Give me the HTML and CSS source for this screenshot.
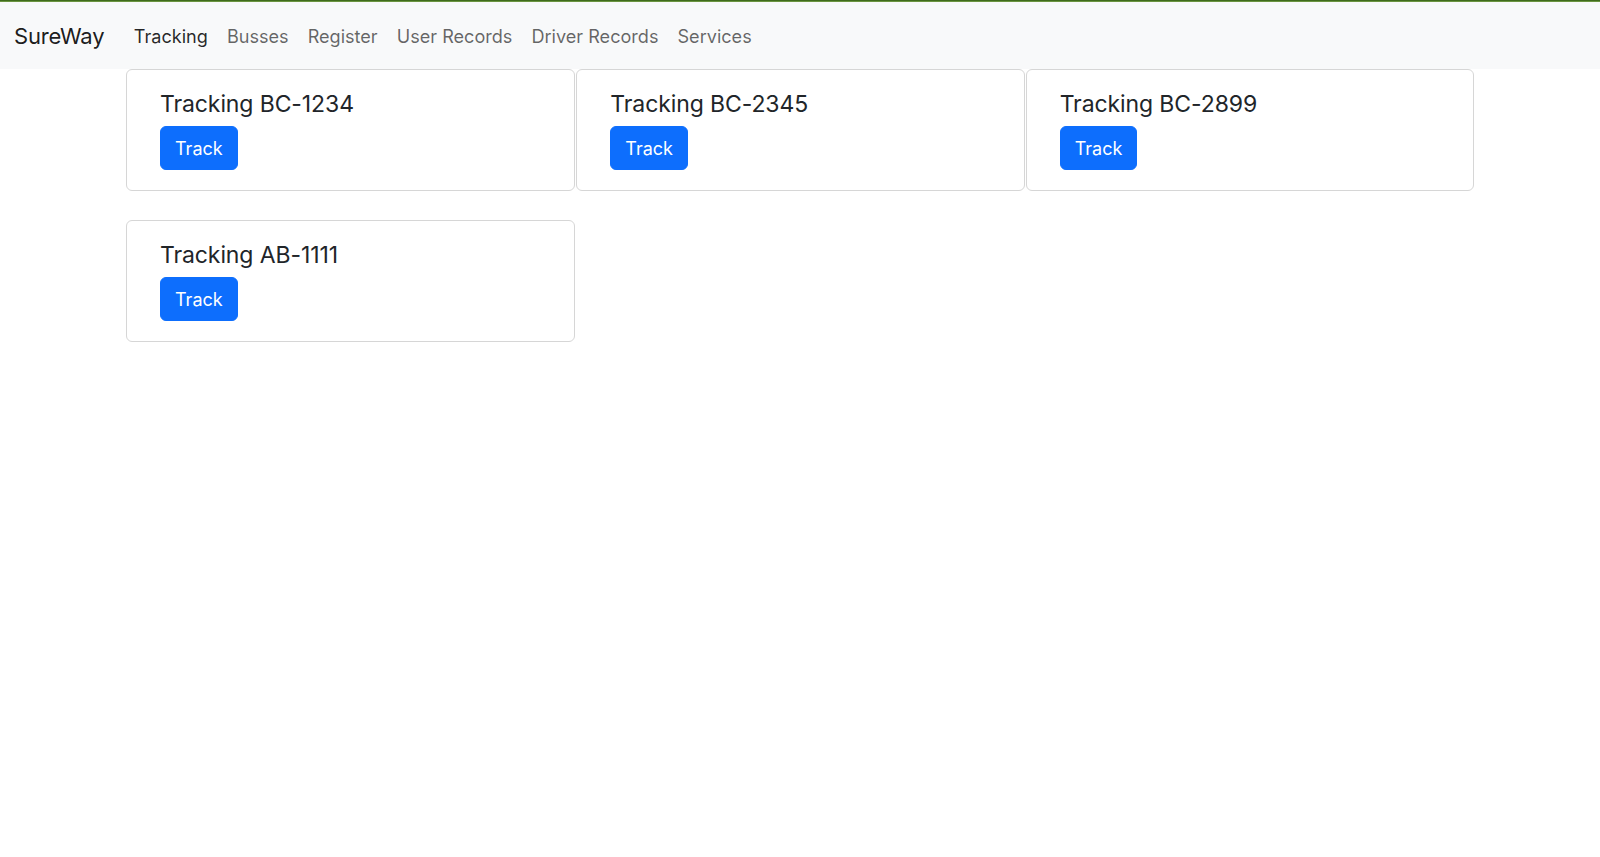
FILE: index.html
```html
<!DOCTYPE html>
<html lang="en">
<head>
<meta charset="utf-8">
<title>SureWay</title>
<link rel="stylesheet" href="styles.css">
</head>
<body>
<div class="topline"></div>
<nav class="navbar">
  <a class="brand" href="#">SureWay</a>
  <ul class="nav">
    <li><a class="nav-link active" href="#">Tracking</a></li>
    <li><a class="nav-link" href="#">Busses</a></li>
    <li><a class="nav-link" href="#">Register</a></li>
    <li><a class="nav-link" href="#">User Records</a></li>
    <li><a class="nav-link" href="#">Driver Records</a></li>
    <li><a class="nav-link" href="#">Services</a></li>
  </ul>
</nav>
<main class="grid">
  <div class="card">
    <h4 class="card-title">Tracking BC-1234</h4>
    <button class="btn">Track</button>
  </div>
  <div class="card">
    <h4 class="card-title">Tracking BC-2345</h4>
    <button class="btn">Track</button>
  </div>
  <div class="card">
    <h4 class="card-title">Tracking BC-2899</h4>
    <button class="btn">Track</button>
  </div>
  <div class="card">
    <h4 class="card-title">Tracking AB-1111</h4>
    <button class="btn">Track</button>
  </div>
</main>
</body>
</html>
```
FILE: styles.css
```css
* { box-sizing: border-box; }
html, body { margin: 0; padding: 0; }
body {
  font-family: Inter, "Noto Sans", "Liberation Sans", sans-serif;
  color: #212529;
  background: #fff;
}
.topline {
  height: 2px;
  background: linear-gradient(#3f6b1c 50%, #6a9440 50%);
}
.navbar {
  display: flex;
  align-items: center;
  height: 67px;
  padding: 1px 14px 0;
  background: #f8f9fa;
}
.brand {
  font-size: 22px;
  color: rgba(0,0,0,.9);
  text-decoration: none;
  margin-right: 20px;
  letter-spacing: -0.2px;
}
.nav {
  display: flex;
  list-style: none;
  margin: 0;
  padding: 0;
}
.nav-link {
  display: block;
  padding: 8px 9.5px;
  font-size: 18.1px;
  color: rgba(0,0,0,.6);
  text-decoration: none;
}
.nav-link.active { color: rgba(0,0,0,.85); }
.grid {
  width: 1348px;
  margin: 0 auto;
  display: grid;
  grid-template-columns: repeat(3, 1fr);
  row-gap: 29px;
}
.card {
  border: 1px solid #d6d6d6;
  border-radius: 6px;
  padding: 19px 33px 18px;
  height: 122px;
}
.card + .card { margin-left: 1px; }
.card:nth-child(3n+1) { margin-left: 0; }
.card-title {
  margin: 0 0 6px;
  font-size: 23px;
  font-weight: 400;
  line-height: 31px;
  letter-spacing: -0.1px;
}
.btn {
  display: inline-block;
  height: 44px;
  padding: 0 14px;
  font-family: inherit;
  font-size: 18px;
  color: #fff;
  background: #0d6efd;
  border: 1px solid #0d6efd;
  border-radius: 6px;
}
```
